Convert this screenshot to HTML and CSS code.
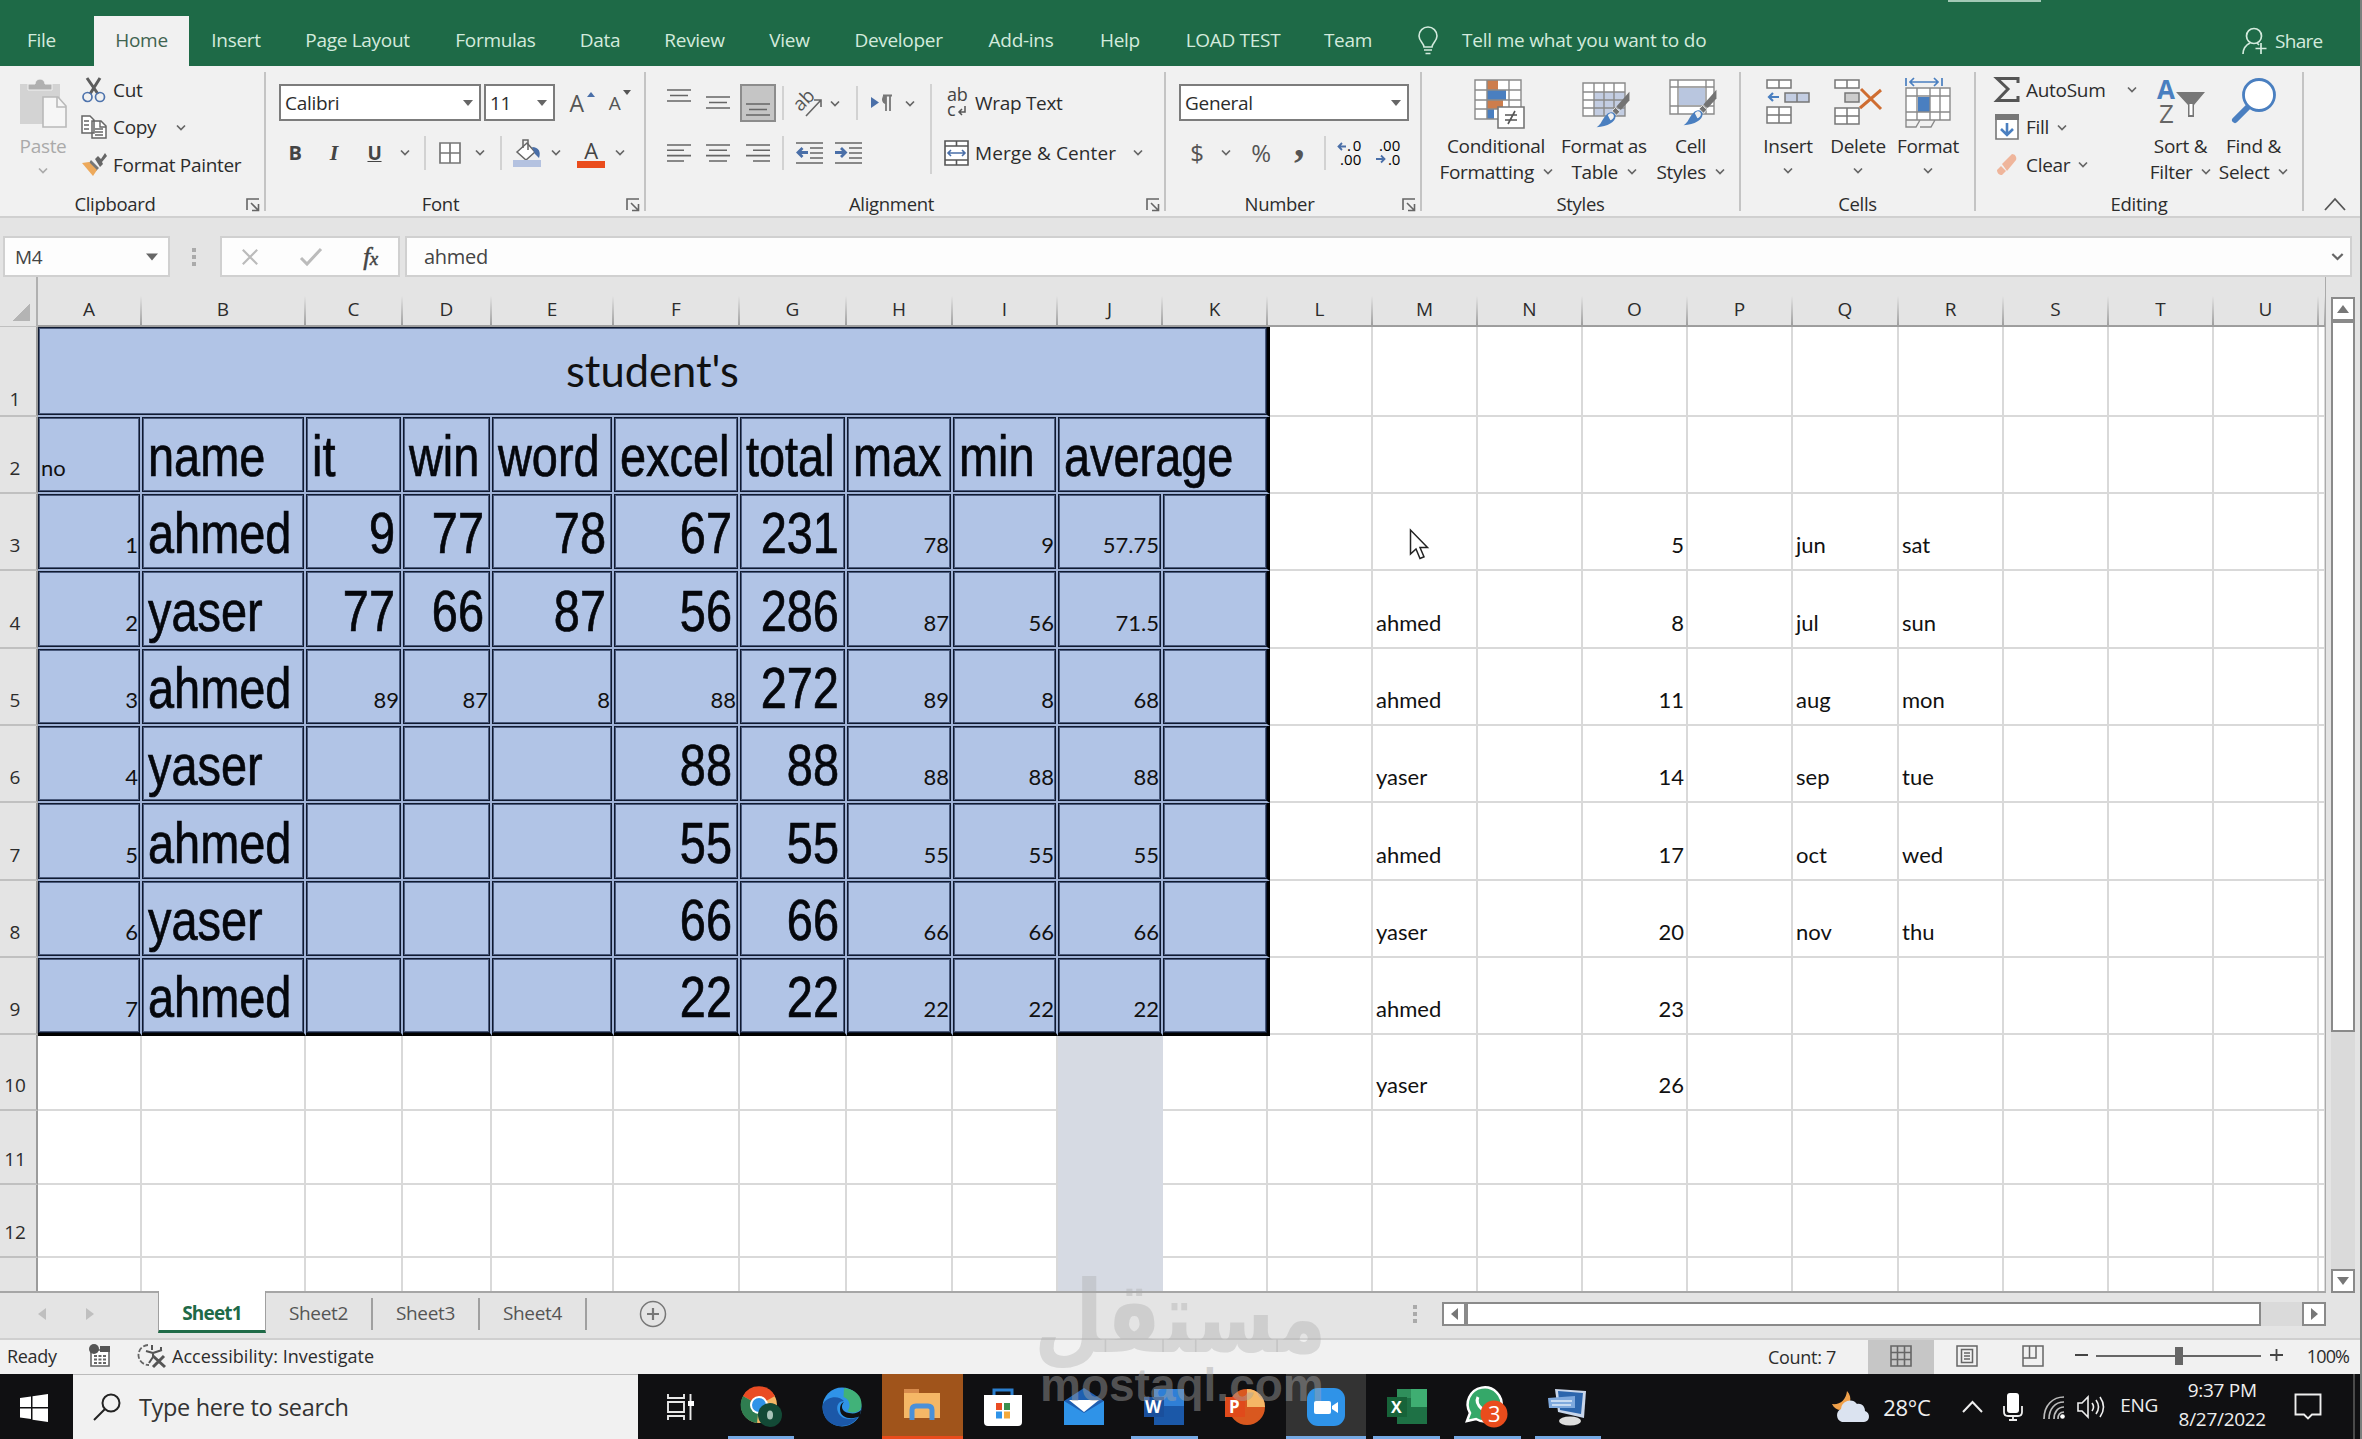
FILE: index.html
```html
<!DOCTYPE html>
<html lang="en">

<head>
    <meta charset="UTF-8">
    <meta name="viewport" content="width=device-width, initial-scale=1.0">
    <title>Sheet1</title>
    <link rel="stylesheet" href="styles.css">
</head>

<body>
    <!-- shared icons -->
    <svg class="defs">
        <symbol id="chev" viewBox="0 0 10 7"><path d="M1 1.5l4 4 4-4" fill="none" stroke="currentColor" stroke-width="1.7" /></symbol>
        <symbol id="tri" viewBox="0 0 10 6"><path d="M0 0h10l-5 6z" fill="currentColor" /></symbol>
        <symbol id="launch" viewBox="0 0 14 14"><path d="M1 12V1h12M5 5l7 7M12.500 6v6.500H6" fill="none" stroke="#666" stroke-width="1.6" /></symbol>
        <symbol id="brush" viewBox="0 0 40 44"><path d="M39 1v10L29 22l-5-4z" fill="#737373" /><path d="M23 19l5 5-4 4-5-5z" fill="#737373" stroke="#f1f1f1" /><path d="M12 28c5-6 11-3 11 1 0 7-9 12-22 13 6-4 6-9 11-14z" fill="#4a7fc0" /><path d="M14 28c3-4 7-2 7 1s-2 4-4 5z" fill="#f1f1f1" /></symbol>
    </svg>

    <div class="window">
        <nav class="tabs">
            <i class="topline"></i>
            <span>File</span>
            <span class="active">Home</span>
            <span>Insert</span>
            <span>Page Layout</span>
            <span>Formulas</span>
            <span>Data</span>
            <span>Review</span>
            <span>View</span>
            <span>Developer</span>
            <span>Add-ins</span>
            <span>Help</span>
            <span>LOAD TEST</span>
            <span>Team</span>
            <svg class="bulb" width="20" height="28" viewBox="0 0 20 28"><path d="M6 20c0-4-5-6-5-11a9 9 0 0 1 18 0c0 5-5 7-5 11zM6 23h8M7.500 26.500h5" fill="none" stroke="#d3eadd" stroke-width="1.6" /></svg>
            <span class="tell">Tell me what you want to do</span>
            <span class="share">
                <svg width="26" height="28" viewBox="0 0 26 28"><circle cx="12" cy="9" r="7.500" fill="none" stroke="#d3eadd" stroke-width="1.7" /><path d="M1 27c0-6 3-9 7-11M19 16v11M13.500 21.500h11M15 16l2 2" fill="none" stroke="#d3eadd" stroke-width="1.7" /></svg>
                Share
            </span>
        </nav>

        <section class="ribbon">
            <div class="group clipboard">
                <div class="body">
                    <div class="big disabled">
                        <svg width="48" height="53" viewBox="0 0 48 53"><path d="M1 7h40v40H1z" fill="#d3d3d3" /><path d="M9 13V7h7a5 5 0 0 1 10 0h7v6z" fill="#b0b0b0" stroke="#f1f1f1" /><path d="M24 20h15l8 9v21H24z" fill="#f6f6f6" stroke="#b9b9b9" stroke-width="1.6" /><path d="M38 20v10h9" fill="none" stroke="#b9b9b9" stroke-width="1.6" /></svg>
                        <b>Paste</b>
                        <svg class="chev"><use href="#chev" /></svg>
                    </div>
                    <div class="list">
                        <p><svg width="26" height="26" viewBox="0 0 26 26"><path d="M6 1l11 16M19 1L9 17" stroke="#5d5d5d" stroke-width="3" /><circle cx="6.500" cy="20" r="4.500" fill="none" stroke="#4f74ad" stroke-width="1.700" /><circle cx="19" cy="20" r="4.500" fill="none" stroke="#4f74ad" stroke-width="1.700" /></svg>Cut</p>
                        <p><svg width="26" height="26" viewBox="0 0 26 26"><path d="M1 2h8l4 4v13H1zM11 7h9l5 5v12H11z" fill="#fff" stroke="#666" stroke-width="1.500" /><path d="M19 7v6h6M3 7h5M3 11h5M3 15h5M14 15h8M14 18h8M14 21h8" fill="none" stroke="#666" stroke-width="1.400" /></svg>Copy<svg class="chev far"><use href="#chev" /></svg></p>
                        <p><svg width="26" height="26" viewBox="0 0 26 26"><path d="M14 7l3-3 3 3 4-6 2 3-5 6 1 2-3 3z" fill="#666" /><path d="M10 8l8 8-3 3-7-8z" fill="#777" /><path d="M1 11l7-1 8 8-4 6z" fill="#eda95b" /></svg>Format Painter</p>
                    </div>
                </div>
                <h4>Clipboard<svg><use href="#launch" /></svg></h4>
            </div>

            <div class="group font">
                <div class="row r1">
                    <div class="combo">Calibri<svg class="tri"><use href="#tri" /></svg></div>
                    <div class="combo">11<svg class="tri"><use href="#tri" /></svg></div>
                    <span class="grow">A<svg class="up"><use href="#tri" /></svg></span>
                    <span class="grow small">A<svg><use href="#tri" /></svg></span>
                </div>
                <div class="row r2">
                    <b>B</b><i class="it">I</i><u>U</u>
                    <svg class="chev"><use href="#chev" /></svg><i class="sep"></i>
                    <svg width="22" height="22" viewBox="0 0 22 22"><path d="M1 1h20v20H1zM11 1v20M1 11h20" fill="#fff" stroke="#777" stroke-width="1.700" /></svg>
                    <svg class="chev"><use href="#chev" /></svg><i class="sep"></i>
                    <svg width="28" height="28" viewBox="0 0 28 28"><path d="M4 13L14 4l8 9-9 8z" fill="#fff" stroke="#666" stroke-width="1.500" /><path d="M10 9V1h5v10" fill="none" stroke="#666" stroke-width="1.500" /><path d="M19 8c7 0 9 5 7 11l-4-4z" fill="#4a6fa8" /><path d="M0 21h28v7H0z" fill="#b4c2e0" /></svg>
                    <svg class="chev"><use href="#chev" /></svg>
                    <span class="fc">A</span>
                    <svg class="chev"><use href="#chev" /></svg>
                </div>
                <h4>Font<svg><use href="#launch" /></svg></h4>
            </div>

            <div class="group align">
                <div class="body">
                    <div class="icons">
                        <div class="row r1">
                            <svg width="24" height="30" viewBox="0 0 24 30"><path d="M0 2h24M3 7.500h18M0 13h24" stroke="#666" stroke-width="1.600" /></svg>
                            <svg width="24" height="30" viewBox="0 0 24 30"><path d="M0 9h24M3 14.500h18M0 20h24" stroke="#666" stroke-width="1.600" /></svg>
                            <span class="sel"><svg width="24" height="30" viewBox="0 0 24 30"><path d="M0 16h24M3 21.500h18M0 27h24" stroke="#666" stroke-width="1.600" /></svg></span>
                            <i class="sep"></i>
                            <svg width="28" height="28" viewBox="0 0 28 28"><text x="0" y="18" transform="rotate(-45 9 14)" font-size="19" fill="#555">ab</text><path d="M11 27L26 11M19 11h7v7" fill="none" stroke="#666" stroke-width="1.600" /></svg>
                            <svg class="chev"><use href="#chev" /></svg><i class="sep"></i>
                            <svg width="22" height="18" viewBox="0 0 22 18"><path d="M0 3l8 5.500L0 14z" fill="#4a6fa8" /><path d="M15 17V2M19 17V2M12 1.500h9" stroke="#777" stroke-width="1.800" /><path d="M15 1a4 4.500 0 0 0 0 9z" fill="#777" /></svg>
                            <svg class="chev"><use href="#chev" /></svg>
                        </div>
                        <div class="row r2">
                            <svg width="24" height="20" viewBox="0 0 24 20"><path d="M0 2h24M0 7.300h17M0 12.600h24M0 18h17" stroke="#666" stroke-width="1.600" /></svg>
                            <svg width="24" height="20" viewBox="0 0 24 20"><path d="M0 2h24M3 7.300h18M0 12.600h24M3 18h18" stroke="#666" stroke-width="1.600" /></svg>
                            <svg width="24" height="20" viewBox="0 0 24 20"><path d="M0 2h24M7 7.300h17M0 12.600h24M7 18h17" stroke="#666" stroke-width="1.600" /></svg>
                            <i class="sep"></i>
                            <svg width="27" height="24" viewBox="0 0 27 24"><path d="M0 2h27M14 7h13M14 12h13M14 17h13M0 22h27" stroke="#666" stroke-width="1.500" /><path d="M12 11.500H2M6.500 7L2 11.500 6.500 16" fill="none" stroke="#4a6fa8" stroke-width="2.800" /></svg>
                            <svg width="27" height="24" viewBox="0 0 27 24"><path d="M0 2h27M14 7h13M14 12h13M14 17h13M0 22h27" stroke="#666" stroke-width="1.500" /><path d="M0 11.500h10M6 7l4.500 4.500L6 16" fill="none" stroke="#4a6fa8" stroke-width="2.800" /></svg>
                        </div>
                    </div>
                    <div class="wrap">
                        <p><svg width="25" height="28" viewBox="0 0 25 28"><text x="3" y="12" font-size="18" fill="#444">ab</text><text x="3" y="27" font-size="18" fill="#444">c</text><path d="M21 17v6h-6M18 20l-3 3 3 3" fill="none" stroke="#555" stroke-width="1.500" /></svg>Wrap Text</p>
                        <p><svg width="25" height="26" viewBox="0 0 25 26"><path d="M1 1h23v24H1zM1 6h23M1 20h23M12.500 1v5M12.500 20v5" fill="#fff" stroke="#555" stroke-width="1.600" /><path d="M4 13h17M7 10l-3 3 3 3M18 10l3 3-3 3" fill="none" stroke="#4a6fa8" stroke-width="1.600" /></svg><span class="merge">Merge &amp; Center</span><svg class="chev far"><use href="#chev" /></svg></p>
                    </div>
                </div>
                <h4>Alignment<svg><use href="#launch" /></svg></h4>
            </div>

            <div class="group number">
                <div class="row r1">
                    <div class="combo">General<svg class="tri"><use href="#tri" /></svg></div>
                </div>
                <div class="row r2">
                    <span>$</span><svg class="chev"><use href="#chev" /></svg><span>%</span><span class="comma">,</span><i class="sep"></i>
                    <svg width="25" height="26" viewBox="0 0 25 26"><text x="10" y="11" font-size="15" textLength="14">.0</text><text x="3" y="25" font-size="15" textLength="21">.00</text><path d="M9 6.500H1.500M5 3L1.500 6.500 5 10" fill="none" stroke="#4a6fa8" stroke-width="1.800" /></svg>
                    <svg width="25" height="26" viewBox="0 0 25 26"><text x="3" y="11" font-size="15" textLength="21">.00</text><text x="12" y="25" font-size="15" textLength="12">.0</text><path d="M0 19h8.500M5 15.500L8.500 19 5 22.500" fill="none" stroke="#4a6fa8" stroke-width="1.800" /></svg>
                </div>
                <h4>Number<svg><use href="#launch" /></svg></h4>
            </div>

            <div class="group styles">
                <div class="body">
                    <div class="big">
                        <svg width="52" height="53" viewBox="0 0 52 53"><path d="M2 3h46v39H2z" fill="#fff" /><path d="M14 3h11v10H14zM14 23h16v9H14z" fill="#cd7d4c" /><path d="M14 13h19v10H14zM14 32h7v10h-7z" fill="#4a7fc0" /><path d="M2 3h46v39H2zM14 3v39M36 3v39M2 13h46M2 23h46M2 32h46" fill="none" stroke="#8a8a8a" stroke-width="1.400" /><path d="M25 30h26v21H25z" fill="#fff" stroke="#777" stroke-width="1.600" /><path d="M32 38h12M32 43h12M42 34l-7 13" stroke="#555" stroke-width="1.600" /></svg>
                        <b>Conditional</b>
                        <b>Formatting <svg class="chev"><use href="#chev" /></svg></b>
                    </div>
                    <div class="big">
                        <svg width="50" height="53" viewBox="0 0 50 53"><path d="M1 6h42v33H1z" fill="#fff" /><path d="M12 15h31v24H12z" fill="#c3cde2" /><path d="M1 6h42v33H1zM12 6v33M22 6v33M32 6v33M1 15h42M1 23h42M1 31h42" fill="none" stroke="#8a8a8a" stroke-width="1.400" /><use href="#brush" x="12" y="14" width="38" height="38" /></svg>
                        <b>Format as</b>
                        <b>Table <svg class="chev"><use href="#chev" /></svg></b>
                    </div>
                    <div class="big">
                        <svg width="50" height="53" viewBox="0 0 50 53"><path d="M1 3h44v34H1z" fill="#fff" /><path d="M10 11h26v17H10z" fill="#b9c6df" /><path d="M1 3h44v34H1zM9 3v34M37 3v34M1 10h44M1 29h44" fill="none" stroke="#8a8a8a" stroke-width="1.400" /><use href="#brush" x="12" y="12" width="38" height="38" /></svg>
                        <b>Cell</b>
                        <b>Styles <svg class="chev"><use href="#chev" /></svg></b>
                    </div>
                </div>
                <h4>Styles</h4>
            </div>

            <div class="group cells">
                <div class="body">
                    <div class="big">
                        <svg width="44" height="53" viewBox="0 0 44 53"><path d="M1 3h24v8H1zM13 3v8M1 30h24v16H1zM13 30v16M1 38h24" fill="#fff" stroke="#777" stroke-width="1.500" /><path d="M19 16h24v9H19zM31 16v9" fill="#c3cde2" stroke="#777" stroke-width="1.500" /><path d="M13 20H3M7 16l-4 4 4 4" fill="none" stroke="#4a7fc0" stroke-width="2.200" /></svg>
                        <b>Insert</b>
                        <svg class="chev"><use href="#chev" /></svg>
                    </div>
                    <div class="big">
                        <svg width="48" height="53" viewBox="0 0 48 53"><path d="M1 3h24v8H1zM13 3v8M1 31h24v16H1zM13 31v16M1 39h24" fill="#fff" stroke="#777" stroke-width="1.500" /><path d="M11 16h14v9H11z" fill="#ccc" stroke="#777" stroke-width="1.500" /><path d="M27 12l20 20M47 13L26 31" stroke="#cf6d31" stroke-width="3" /></svg>
                        <b>Delete</b>
                        <svg class="chev"><use href="#chev" /></svg>
                    </div>
                    <div class="big">
                        <svg width="46" height="53" viewBox="0 0 46 53"><path d="M1 11h44v32H1z" fill="#fff" /><path d="M13 20h12v15H13z" fill="#4a7fc0" /><path d="M1 11h44v32H1zM12 11v32M25 11v32M35 11v32M1 19h44M1 35h44M1 43v7h10l4-7M15 50h11l4-7" fill="none" stroke="#8a8a8a" stroke-width="1.400" /><path d="M1 1v8M37 1v8M5 5h28M9 1L5 5l4 4M29 1l4 4-4 4" fill="none" stroke="#4a7fc0" stroke-width="1.700" /></svg>
                        <b>Format</b>
                        <svg class="chev"><use href="#chev" /></svg>
                    </div>
                </div>
                <h4>Cells</h4>
            </div>

            <div class="group editing">
                <div class="body">
                    <div class="list">
                        <p><svg width="26" height="26" viewBox="0 0 26 26"><path d="M24 6V1.500H3L14 12 3 23.500h21V19" fill="none" stroke="#555" stroke-width="3" /></svg>AutoSum<svg class="chev far2"><use href="#chev" /></svg></p>
                        <p><svg width="26" height="26" viewBox="0 0 26 26"><path d="M2 1h22v24H2z" fill="#fff" stroke="#777" stroke-width="1.600" /><path d="M1 0h24v6H1z" fill="#777" /><path d="M13 9v12M7 15l6 6 6-6" fill="none" stroke="#4a7fc0" stroke-width="2.600" /></svg>Fill<svg class="chev"><use href="#chev" /></svg></p>
                        <p><svg width="26" height="26" viewBox="0 0 26 26"><path d="M8 12L18 2c3 0 5 3 4 6L13 19z" fill="#efb59b" /><path d="M7 14l5 5-4 4c-3 0-5-2-5-5z" fill="#efb59b" /></svg>Clear<svg class="chev"><use href="#chev" /></svg></p>
                    </div>
                    <div class="big">
                        <svg width="50" height="53" viewBox="0 0 50 53"><text x="1" y="22" font-size="26" font-weight="bold" fill="#4a7fc0">A</text><text x="3" y="46" font-size="26" fill="#666">Z</text><path d="M20 15h29L38 28v12h-6V28z" fill="#777" /><path d="M33.500 27h3v11h-3z" fill="#fff" /></svg>
                        <b>Sort &amp;</b>
                        <b>Filter <svg class="chev"><use href="#chev" /></svg></b>
                    </div>
                    <div class="big">
                        <svg width="46" height="53" viewBox="0 0 46 53"><path d="M18 29L4 43" stroke="#4a7fc0" stroke-width="6" stroke-linecap="round" /><circle cx="28" cy="18" r="15.500" fill="#fff" stroke="#4a7fc0" stroke-width="2.800" /></svg>
                        <b>Find &amp;</b>
                        <b>Select <svg class="chev"><use href="#chev" /></svg></b>
                    </div>
                </div>
                <h4>Editing</h4>
            </div>
            <svg class="collapse" width="22" height="14" viewBox="0 0 22 14"><path d="M1 13L11 2l10 11" fill="none" stroke="#555" stroke-width="1.800" /></svg>
        </section>

        <section class="formula">
            <div class="box namebox">M4<svg class="tri"><use href="#tri" /></svg></div>
            <i class="dots"></i>
            <div class="box fx">
                <svg width="18" height="18" viewBox="0 0 20 18"><path d="M2 1l16 16M18 1L2 17" stroke="#bbb" stroke-width="2.400" /></svg>
                <svg width="22" height="18" viewBox="0 0 22 18"><path d="M1 10l6 6L21 1" fill="none" stroke="#bbb" stroke-width="3" /></svg>
                <em>f<small>x</small></em>
            </div>
            <div class="box input">ahmed<svg class="chev"><use href="#chev" /></svg></div>
        </section>

        <main class="main">
            <div class="sheet" id="sheet"></div>
            <div class="vscroll">
                <div class="btn"><svg width="12" height="8" viewBox="0 0 12 8"><path d="M0 8h12L6 0z" fill="#777" /></svg></div>
                <div class="thumb"></div>
                <div class="btn end"><svg width="12" height="8" viewBox="0 0 12 8"><path d="M0 0h12L6 8z" fill="#777" /></svg></div>
            </div>
        </main>

        <section class="sheets">
            <svg width="8" height="12" viewBox="0 0 8 12"><path d="M8 0v12L0 6z" fill="#bfbfbf" /></svg>
            <svg width="8" height="12" viewBox="0 0 8 12"><path d="M0 0v12l8-6z" fill="#bfbfbf" /></svg>
            <span class="current">Sheet1</span>
            <span>Sheet2</span>
            <span>Sheet3</span>
            <span>Sheet4</span>
            <svg class="add" width="28" height="28" viewBox="0 0 28 28"><circle cx="14" cy="14" r="12.500" fill="none" stroke="#777" stroke-width="1.500" /><path d="M14 8v12M8 14h12" stroke="#777" stroke-width="2.200" /></svg>
            <i class="dots"></i>
            <div class="hscroll">
                <div class="btn"><svg width="7" height="12" viewBox="0 0 7 12"><path d="M7 0v12L0 6z" fill="#777" /></svg></div>
                <div class="thumb"></div>
                <div class="btn end"><svg width="7" height="12" viewBox="0 0 7 12"><path d="M0 0v12l7-6z" fill="#777" /></svg></div>
            </div>
        </section>

        <section class="status">
            <span>Ready</span>
            <svg class="macro" width="22" height="24" viewBox="0 0 22 24"><path d="M2 6h18v16H2z" fill="#fff" stroke="#666" stroke-width="1.600" /><path d="M11 2h10v6H11z" fill="#555" /><circle cx="5" cy="5" r="5" fill="#555" /><path d="M5 12h12M5 15.500h12M5 19h12" stroke="#666" stroke-width="1.800" stroke-dasharray="3 1.500" /></svg>
            <svg class="acc" width="27" height="26" viewBox="0 0 27 26"><path d="M8 2a10 10 0 0 0 1 20" fill="none" stroke="#666" stroke-width="1.800" stroke-dasharray="5 2" /><path d="M12 2v5M6 8l7 2v4l-4 6M13 10l9-3M21 4v4" fill="none" stroke="#555" stroke-width="2" /><path d="M13 13l12 11M24 13L13 24" stroke="#555" stroke-width="3" /></svg>
            <span class="check">Accessibility: Investigate</span>
            <span class="count">Count: 7</span>
            <div class="views">
                <span class="on"><svg width="22" height="22" viewBox="0 0 22 22"><path d="M1 1h20v20H1zM7.500 1v20M14.500 1v20M1 7.500h20M1 14.500h20" fill="none" stroke="#666" stroke-width="1.600" /></svg></span>
                <span><svg width="22" height="22" viewBox="0 0 22 22"><path d="M1 1h20v20H1zM5.500 4.500h11v13h-11zM8 8h6M8 11h6M8 14h6" fill="none" stroke="#666" stroke-width="1.500" /></svg></span>
                <span><svg width="22" height="22" viewBox="0 0 22 22"><path d="M1 1h20v20H1zM1 13h13V1M7.500 1v12" fill="none" stroke="#666" stroke-width="1.500" /></svg></span>
            </div>
            <svg class="zoom" width="208" height="20" viewBox="0 0 208 20"><path d="M0 9h13M195 9h13M201.500 3v12" stroke="#444" stroke-width="1.800" /><path d="M21 10h165" stroke="#666" stroke-width="2" /><path d="M100 1h8v18h-8z" fill="#666" /></svg>
            <span class="pct">100%</span>
        </section>

        <footer class="taskbar">
            <div class="start"><svg width="28" height="28" viewBox="0 0 28 28"><path d="M0 4l11-1.500V13H0zM12.500 2.300L28 0v13H12.500zM0 14.500h11V25L0 23.500zM12.500 14.500H28V28l-15.500-2.200z" fill="#fff" /></svg></div>
            <div class="search">
                <svg width="28" height="28" viewBox="0 0 28 28"><circle cx="18" cy="10" r="8.500" fill="none" stroke="#222" stroke-width="2" /><path d="M12 16L1 27" stroke="#222" stroke-width="2" /></svg>
                Type here to search
            </div>
            <div class="apps">
                <span><svg width="28" height="26" viewBox="0 0 28 26"><path d="M2 0v4h16V0M2 26v-4h16v4M2 8h16v10H2zM24.500 0v26" fill="none" stroke="#e8e8e8" stroke-width="1.900" /><path d="M22 7h6v5h-6z" fill="#fff" /></svg></span>
                <span class="open"><svg width="42" height="42" viewBox="0 0 42 42"><circle cx="19" cy="19" r="18" fill="#f5b766" /><path d="M19 19L3 10a18 18 0 0 1 32 0z" fill="#ea4c24" /><path d="M19 19l-2 18A18 18 0 0 1 3 10z" fill="#2f7d50" /><circle cx="19" cy="19" r="9" fill="#fff" /><circle cx="19" cy="19" r="7" fill="#2f93e8" /><circle cx="30" cy="29" r="12" fill="#134a36" /><ellipse cx="30" cy="29" rx="3" ry="4.500" fill="#a9c4b9" /></svg></span>
                <span><svg width="40" height="40" viewBox="0 0 40 40"><circle cx="20" cy="20" r="19.500" fill="#2f93e8" /><path d="M22 1c12 1 18 9 17.500 17 0 8-9 9-14 6 4-5 2-12-4-14z" fill="#41b279" /><path d="M1 17c4-8 16-9 21-3-9 0-9 13 0 17 5 2 10 1 14-1C30 41 10 43 3 30c-2-4-3-9-2-13z" fill="#1b58a8" /><path d="M22 15c-4 4-2 10 5 11 5 1 9 0 12-3l-1 6c-7 4-20 3-20-7 0-3 1-6 4-7z" fill="#101012" /></svg></span>
                <span class="folder"><svg width="36" height="32" viewBox="0 0 36 32"><path d="M0 0h15v4h21v25H0z" fill="#f5b766" /><path d="M0 0h15v4H0z" fill="#d88b4c" /><path d="M8 31V21q0-4 4-4h12q4 0 4 4v10" fill="none" stroke="#4a90d9" stroke-width="5" /></svg></span>
                <span><svg width="38" height="40" viewBox="0 0 38 40"><path d="M10 9V3h18v6" fill="none" stroke="#2a7fcf" stroke-width="3" /><path d="M0 8h38v27q0 4-4 4H4q-4 0-4-4z" fill="#fff" /><path d="M12 16h6v7h-6z" fill="#ea4c24" /><path d="M20 16h6v7h-6z" fill="#3b8f4e" /><path d="M12 24.500h6v7h-6z" fill="#2f93e8" /><path d="M20 24.500h6v7h-6z" fill="#f5a93b" /></svg></span>
                <span><svg width="40" height="38" viewBox="0 0 40 38"><path d="M0 13L20 0l20 13v24H0z" fill="#1f5fb0" /><path d="M5 12h30L20 24z" fill="#fff" /><path d="M0 13l20 12 20-12v24H0z" fill="#2f93e8" /></svg></span>
                <span class="open"><svg width="40" height="36" viewBox="0 0 40 36"><path d="M10 0h30v36H10z" fill="#1b58a8" /><path d="M10 0h30v17H10z" fill="#2f7fd6" /><path d="M0 8h20v20H0z" fill="#1a4f9c" /><text x="1" y="24" font-size="17" font-weight="bold" fill="#fff">W</text></svg></span>
                <span><svg width="40" height="36" viewBox="0 0 40 36"><circle cx="22" cy="18" r="18" fill="#d9581f" /><path d="M22 0a18 18 0 0 1 18 18H22z" fill="#f5b766" /><path d="M0 8h20v20H0z" fill="#e04a1b" /><text x="4" y="24" font-size="17" font-weight="bold" fill="#fff">P</text></svg></span>
                <span class="open focus"><svg width="38" height="38" viewBox="0 0 38 38"><rect width="38" height="38" rx="11" fill="#2f93e8" /><rect x="7" y="13" width="17" height="13" rx="2" fill="#fff" /><path d="M25 18l6-4v11l-6-4z" fill="#fff" /></svg></span>
                <span class="open"><svg width="40" height="36" viewBox="0 0 40 36"><path d="M10 0h30v35H10z" fill="#1e7145" /><path d="M24 0h16v18H24z" fill="#3fae72" /><path d="M10 0h14v9H10z" fill="#2f8f5b" /><path d="M0 8h20v20H0z" fill="#176339" /><text x="4" y="24" font-size="16" font-weight="bold" fill="#fff">X</text></svg></span>
                <span class="open"><svg width="42" height="42" viewBox="0 0 42 42"><path d="M1 35l3-8a17 17 0 1 1 6 6z" fill="#35a869" stroke="#fff" stroke-width="2.500" /><path d="M12 11q-3 6 4 12 6 5 10 2" fill="none" stroke="#fff" stroke-width="3" /><circle cx="28" cy="28" r="13.500" fill="#ea4c1c" /><text x="22" y="36" font-size="22" fill="#fff">3</text></svg></span>
                <span class="open"><svg width="40" height="38" viewBox="0 0 40 38"><ellipse cx="22" cy="33" rx="11" ry="4.500" fill="#ddd" /><path d="M7 1l31 2-2 27-26-6z" fill="#c9d6ea" /><path d="M10 3l25 2-2 21-21-4z" fill="#2d66ad" /><path d="M0 10l27-2v12L1 20z" fill="#7fa9dd" /><path d="M3 13h21M4 17h19" stroke="#dfeaf8" stroke-width="1.500" /></svg></span>
            </div>
            <div class="tray">
                <svg width="38" height="34" viewBox="0 0 38 34"><path d="M15 1c6 6 4 17-6 19-4 0-7-2-9-6 8 1 14-4 15-13z" fill="#f0a14b" /><path d="M10 32a7 7 0 0 1-1-13 9 9 0 0 1 16-5c6-1 8 4 8 7 6 2 5 11-1 11z" fill="#dbe3f0" /></svg>
                <span class="temp">28°C</span>
                <svg width="21" height="12" viewBox="0 0 21 12"><path d="M1 11l9.500-10L20 11" fill="none" stroke="#eee" stroke-width="2" /></svg>
                <svg width="20" height="28" viewBox="0 0 20 28"><rect x="4" y="0" width="12" height="20" rx="3" fill="#fff" /><path d="M1 13v6q0 4 4 4h10q4 0 4-4v-6M10 23v4M6 27h8" fill="none" stroke="#eee" stroke-width="1.800" /></svg>
                <svg width="22" height="24" viewBox="0 0 22 24"><path d="M1 24C1 10 10 2 21 2M6 24C6 14 12 7 21 7M11 24c0-7 4-12 10-12M15 24c0-4 2-7 6-7" fill="none" stroke="#bbb" stroke-width="1.700" /><circle cx="19.500" cy="21.500" r="2.300" fill="#fff" /></svg>
                <svg width="28" height="24" viewBox="0 0 28 24"><path d="M1 8h4l6-6v20l-6-6H1zM15 8q3 4 0 8M19 5q5 7 0 14M23 2q7 10 0 20" fill="none" stroke="#eee" stroke-width="1.600" /></svg>
                <span class="lang">ENG</span>
                <div class="clock">9:37 PM<br>8/27/2022</div>
                <svg class="note" width="28" height="28" viewBox="0 0 28 28"><path d="M1.500 1.500h25v20H18l-4 4-4-4H1.500z" fill="none" stroke="#eee" stroke-width="1.900" /></svg>
            </div>
        </footer>

        <svg class="pointer" width="20" height="33" viewBox="0 0 20 33"><path d="M1.500 2v24l5.500-5 4 9.500 4-1.700-4-9.300h7.500z" fill="#fff" stroke="#222" stroke-width="1.500" /></svg>
        <div class="mark">
            <div class="ar" lang="ar">مستقل</div>
            <div class="en">mostaql.com</div>
        </div>
    </div>
    <script src="script.js"></script>
</body>

</html>
```
FILE: styles.css
```css
* {
    margin: 0;
    padding: 0;
    box-sizing: border-box;
}

body {
    width: 2362px;
    height: 1439px;
    overflow: hidden;
    font-family: "Open Sans", "Noto Sans", sans-serif;
    font-size: 19px;
    letter-spacing: -0.3px;
    color: #2c2c2c;
}

svg {
    flex: none;
    overflow: visible;
}

.defs {
    position: absolute;
    width: 0;
    height: 0;
}

.window {
    position: relative;
    width: 2362px;
    height: 1439px;
    border-right: 2px solid #7b7f7d;
    background: #e4e4e4;
}

/* 选项卡 */
.tabs {
    height: 66px;
    padding-top: 16px;
    background: #1e6a47;
    color: #d3eadd;
    display: grid;
    grid-template-columns: 94px 95px 94px 149px 127px 82px 107px 83px 135px 110px 88px 138px 92px 68px 703px 1fr;
    line-height: 49px;
    text-align: center;
    white-space: nowrap;
}

.topline {
    position: absolute;
    left: 1948px;
    top: 0;
    width: 93px;
    height: 2px;
    background: #a3c9b6;
}

.tabs span:nth-of-type(1) {
    padding-right: 11px;
}

.tabs .active {
    background: #f1f1f1;
    color: #3f6350;
}

.bulb {
    align-self: center;
    justify-self: center;
}

.tell {
    text-align: left;
    letter-spacing: -0.2px;
}

.tabs .share {
    display: flex;
    align-items: center;
    gap: 7px;
    padding-left: 77px;
    letter-spacing: -0.7px;
}

/* 功能区 */
.ribbon {
    height: 152px;
    background: #f1f1f1;
    border-bottom: 2px solid #d0d0d0;
    display: flex;
    padding-top: 6px;
}

.group {
    position: relative;
    height: 139px;
    border-right: 2px solid #c4c4c4;
    padding-top: 12px;
    display: flex;
    flex-direction: column;
}

.group h4 {
    position: relative;
    margin-top: auto;
    height: 24px;
    line-height: 24px;
    margin-bottom: -5px;
    font-size: 18.500px;
    font-weight: normal;
    text-align: center;
    flex: none;
}

.group h4 svg {
    position: absolute;
    right: 4px;
    top: 6px;
    width: 14px;
    height: 14px;
}

.body {
    display: flex;
    height: 119px;
}

.row {
    display: grid;
    align-items: center;
    justify-items: center;
    height: 37px;
}

.r2 {
    margin-top: 13px;
}

.chev {
    width: 10px;
    height: 7px;
    color: #666;
}

.tri {
    width: 10px;
    height: 6px;
    color: #666;
}

.sep {
    width: 2px;
    height: 34px;
    background: #d2d2d2;
}

.combo {
    width: 100%;
    height: 37px;
    border: 2px solid #7c7c7c;
    background: #fff;
    padding: 0 6px 0 4px;
    display: flex;
    align-items: center;
    justify-content: space-between;
}

.big {
    display: flex;
    flex-direction: column;
    align-items: center;
    white-space: nowrap;
}

.big > svg:first-child {
    margin-bottom: 3px;
}

.big b {
    font-weight: normal;
    line-height: 26px;
}

.big > .chev {
    margin-top: 8px;
}

.big b .chev {
    margin: 0 0 4px 4px;
}

.disabled,
.disabled .chev {
    color: #aaa;
}

.list p,
.wrap p {
    display: flex;
    align-items: center;
    height: 37.500px;
    gap: 6px;
    white-space: nowrap;
}

.list p .chev {
    margin-left: 2px;
}

.clipboard .list .far {
    margin-left: 14px;
}

.list .far2 {
    margin-left: 16px !important;
}

.clipboard,
.styles,
.cells,
.editing {
    padding-top: 5px;
}

.clipboard {
    width: 266px;
}

.clipboard .big {
    width: 84px;
    padding-left: 2px;
}

.clipboard .list {
    margin: -6px 0 0 -3px;
}

.clipboard h4 {
    padding-right: 34px;
}

.font {
    width: 380px;
    padding-left: 13px;
}

.font .r1 {
    grid-template-columns: 202px 71px 46px 24px;
    gap: 3px;
}

.font .r2 {
    grid-template-columns: 26px 52px 29px 31px 10px 40px 20px 22px 30px 28px 42px 16px;
    padding-left: 3px;
    font-size: 20px;
    color: #444;
}

.font h4 {
    padding-right: 42px;
}

.it {
    font-family: "Liberation Serif", serif;
    font-weight: bold;
    font-size: 22px;
}

.font u {
    font-weight: bold;
    font-size: 19px;
}

.fc {
    width: 28px;
    height: 30px;
    line-height: 24px;
    font-size: 22px;
    text-align: center;
    border-bottom: 7px solid #ea4c1c;
}

.grow {
    position: relative;
    font-size: 23px;
    color: #555;
    padding-right: 9px;
}

.grow svg {
    position: absolute;
    right: -2px;
    top: 5px;
    width: 8px;
    height: 5px;
}

.grow .up {
    transform: rotate(180deg);
    color: #4a6fa8;
}

.grow.small {
    font-size: 19px;
}

.grow.small svg {
    top: 0;
}

.align {
    width: 520px;
    padding-left: 13px;
}

.align .icons {
    width: 273px;
    border-right: 2px solid #d2d2d2;
    height: 90px;
}

.align .icons .r1 {
    grid-template-columns: 40px 38px 42px 8px 44px 8px 36px 13px 44px;
}

.align .icons .r2 {
    grid-template-columns: 40px 38px 42px 8px 44px 34px;
}

.sel {
    width: 36px;
    height: 38px;
    border: 2px solid #8c8c8c;
    background: #c5c5c5;
    display: flex;
    align-items: center;
    justify-content: center;
}

.wrap {
    padding-left: 12px;
}

.wrap p {
    height: 37px;
    margin-bottom: 13px;
}

.merge {
    letter-spacing: 0.1px;
}

.wrap .far {
    margin-left: 11px;
}

.align h4 {
    padding-right: 40px;
}

.number {
    width: 256px;
    padding-left: 13px;
}

.number .r1 {
    grid-template-columns: 230px;
}

.number .r2 {
    grid-template-columns: 36px 22px 48px 28px 24px 24px 54px;
    font-size: 24px;
    color: #555;
}

.number .comma {
    font: bold 42px/20px "Liberation Serif", serif;
    margin-top: -22px;
}

.number h4 {
    padding-right: 40px;
}

.styles {
    width: 319px;
}

.styles .body {
    display: grid;
    grid-template-columns: 124px 92px 81px;
    padding-left: 12px;
}

.styles .big > svg {
    position: relative;
    left: 3px;
}

.cells {
    width: 235px;
}

.cells .body {
    display: grid;
    grid-template-columns: 70px 70px 70px;
    padding-left: 12px;
}

.editing {
    width: 328px;
}

.editing .list {
    width: 168px;
    padding-left: 18px;
    margin-top: -6px;
}

.editing .big {
    width: 73px;
}

.collapse {
    margin: 125px 0 0 20px;
}

/* 编辑栏 */
.formula {
    height: 59px;
    padding: 18px 8px 0 3px;
    display: flex;
    font-size: 20px;
}

.box {
    height: 41px;
    border: 2px solid #d0d0d0;
    background: #fdfdfd;
    display: flex;
    align-items: center;
    justify-content: space-between;
    color: #444;
}

.namebox {
    width: 167px;
    padding: 0 10px;
    font-size: 19px;
}

.namebox .tri {
    width: 12px;
    height: 8px;
}

.dots {
    width: 4px;
    height: 18px;
    background: repeating-linear-gradient(#aaa 0 4px, transparent 4px 7px);
}

.formula .dots {
    margin: 12px 24px 0 22px;
}

.fx {
    width: 180px;
    padding: 0 20px 0 19px;
}

.fx em {
    font: italic 25px "Liberation Serif", serif;
    -webkit-text-stroke: 0.5px #444;
}

.fx small {
    font-size: 19px;
}

.input {
    flex: 1;
    margin-left: 5px;
    padding: 0 6px 0 17px;
}

.input .chev {
    width: 13px;
    height: 9px;
    stroke-width: 2;
}

.main {
    display: flex;
    height: 1016px;
}

/* 表格 */
.sheet {
    width: 2326px;
    height: 1016px;
    overflow: hidden;
    display: grid;
    grid-template-columns: 38px 104px 164px 97px 89px 122px 126px 107px 106px 105px 105px 105px 105px 105px 105px 105px 105px 106px 105px 105px 105px 105px 7px;
    grid-template-rows: 50px 90px 77px 77px 78px 77px 77px 78px 77px 77px 76px 74px 73px 35px;
    border-right: 1px solid #aaa;
    border-bottom: 2px solid #a6a6a6;
    font-family: Lato, sans-serif;
    font-size: 22px;
    line-height: 1;
    letter-spacing: 0;
    color: #111;
}

.cell {
    background: #fff;
    border-right: 2px solid #d9d9d9;
    border-bottom: 2px solid #d9d9d9;
    display: flex;
    align-items: flex-end;
    white-space: nowrap;
    padding: 0 2px 13px 3px;
}

.num {
    justify-content: flex-end;
}

.fill {
    background: #b1c4e6;
    border: 0 solid #9fb2d6;
    border-width: 0 2px 2px 0;
    box-shadow: inset 0 0 0 1px #101a30, inset 0 0 0 2px #4a5a7c;
    padding: 0 2px 13px 3px;
}

.fill.last {
    border-right: 3px solid #000;
    margin-right: -2px;
    position: relative;
}

.fill.bottom {
    border-bottom: 3px solid #000;
    margin-bottom: -1px;
    padding-bottom: 13px;
    position: relative;
}

.large {
    font-family: "Liberation Sans", Arial, sans-serif;
    font-size: 57.500px;
    padding: 0 6px 7px 6px;
    color: #05070c;
    -webkit-text-stroke: 0.7px #05070c;
}

.fill.bottom.large {
    padding-bottom: 7px;
}

.large span {
    transform: scaleX(.815);
    transform-origin: left;
}

.large.num span {
    transform-origin: right;
}

.title {
    grid-column: span 11;
    align-items: center;
    justify-content: center;
    font-size: 43.500px;
    padding: 0 0 1px;
}

.wide {
    grid-column: span 2;
}

.picked {
    background: #d6dae3;
    border: 0;
}

.head,
.corner,
.side {
    font-family: "Open Sans", sans-serif;
    font-size: 19px;
    color: #2c2c2c;
    background: #e4e4e4;
    display: flex;
    justify-content: center;
}

.head {
    border-bottom: 2px solid #9b9b9b;
    border-right: 2px solid;
    border-image: linear-gradient(#e4e4e4 40%, #9b9b9b) 2;
    padding-top: 23px;
}

.corner {
    border-bottom: 1px solid #c0c0c0;
    border-right: 2px solid #b0b0b0;
    background: linear-gradient(135deg, transparent 50%, #b4b4b4 50%) 12px 26px / 18px 18px no-repeat #e4e4e4;
}

.side {
    align-items: flex-end;
    border-right: 2px solid #9b9b9b;
    border-bottom: 2px solid #c0c0c0;
    padding: 0 6px 14px 0;
}

.side.first {
    padding-bottom: 6px;
}

/* 滚动条 */
.vscroll {
    width: 24px;
    margin: 20px 0 0 5px;
    background: #dadada;
    display: flex;
    flex-direction: column;
}

.btn {
    width: 24px;
    height: 24px;
    border: 2px solid #8a8a8a;
    background: #fff;
    display: flex;
    align-items: center;
    justify-content: center;
    flex: none;
}

.thumb {
    border: 2px solid #8a8a8a;
    background: #fff;
}

.vscroll .thumb {
    height: 711px;
}

.vscroll .end {
    margin-top: auto;
}

/* 工作表标签 */
.sheets {
    height: 45px;
    display: flex;
    align-items: center;
    position: relative;
    padding: 0 0 3px 38px;
}

.sheets > svg:nth-child(2) {
    margin-left: 40px;
}

.sheets > span {
    width: 107px;
    height: 32px;
    line-height: 30px;
    text-align: center;
    border-right: 2px solid #a0a0a0;
    color: #555;
    margin-top: -1px;
}

.sheets .current {
    width: 108px;
    margin: -5px 0 0 64px;
    height: 42px;
    line-height: 44px;
    background: #fff;
    border: 1px solid #a0a0a0;
    border-width: 0 1px 3px;
    border-bottom-color: #1e6a47;
    color: #1e6a47;
    font-weight: bold;
    letter-spacing: -0.8px;
}

.add {
    margin-left: 52px;
}

.sheets .dots {
    margin-left: 746px;
}

.hscroll {
    display: flex;
    width: 884px;
    margin-left: 25px;
    background: #dadada;
}

.hscroll .thumb {
    width: 795px;
}

.hscroll .end {
    margin-left: auto;
}

/* 状态栏 */
.status {
    height: 36px;
    background: #f1f1f1;
    border-top: 2px solid #cfcfcf;
    display: flex;
    align-items: center;
    padding: 0 0 3px 7px;
    font-size: 18px;
}

.status > span:nth-of-type(1) {
    width: 82px;
}

.acc {
    margin: 0 5px 0 29px;
}

.check {
    letter-spacing: 0.05px;
}

.status .count {
    margin-left: auto;
    padding: 2px 32px 0 0;
}

.views {
    display: flex;
    height: 34px;
    margin-bottom: -3px;
}

.views span {
    width: 66px;
    padding-bottom: 3px;
    display: flex;
    align-items: center;
    justify-content: center;
}

.views .on {
    background: #c6c6c6;
}

.zoom {
    margin-left: 9px;
}

.pct {
    width: 77px;
    text-align: right;
    padding-right: 11px;
    letter-spacing: -0.9px;
}

/* 任务栏 */
.taskbar {
    height: 65px;
    background: #101012;
    display: flex;
    color: #eee;
}

.start {
    width: 73px;
    padding: 20px 0 0 20px;
}

.search {
    width: 565px;
    background: #f1f1f1;
    border-top: 1px solid #bbb;
    color: #333;
    font-size: 23.500px;
    letter-spacing: -0.35px;
    display: flex;
    align-items: center;
    gap: 18px;
    padding: 0 0 1px 20px;
}

.apps {
    display: flex;
    padding-left: 2px;
}

.apps span {
    width: 80.700px;
    height: 65px;
    display: flex;
    align-items: center;
    justify-content: center;
    position: relative;
}

.apps .open::after {
    content: "";
    position: absolute;
    left: 7px;
    right: 7px;
    bottom: 0;
    height: 3px;
    background: #76a9e4;
}

.apps .focus {
    background: #333;
}

.apps .focus::after {
    left: 0 !important;
    right: 0 !important;
}

.apps .folder {
    background: #a0541b;
    border-bottom: 3px solid #ea4c1c;
}

.tray {
    flex: 1;
    display: flex;
    align-items: center;
    margin-left: 224px;
    border-right: 2px solid #4a4a4a;
    margin-right: 5px;
}

.temp {
    width: 79px;
    margin-left: 13px;
    font-size: 22px;
}

.tray svg + svg {
    margin-left: 20px;
}

.tray svg:nth-of-type(5) {
    margin-left: 12px;
}

.lang {
    margin-left: 15px;
    width: 47px;
    margin-top: -3px;
}

.clock {
    width: 110px;
    text-align: center;
    line-height: 29px;
    margin-top: -3px;
}

.note {
    margin-left: 17px;
}

.pointer {
    position: absolute;
    left: 1409px;
    top: 528px;
}

.mark {
    position: absolute;
    left: 1040px;
    top: 1270px;
    width: 282px;
    letter-spacing: 0;
    color: rgba(165, 165, 165, .35);
}

.ar {
    font: bold 80px/92px "DejaVu Sans", sans-serif;
    transform: translate(-6px, 2px) scaleY(1.25);
    white-space: nowrap;
    text-align: center;
}

.en {
    font: bold 46px/46px "Liberation Sans", sans-serif;
    color: rgba(165, 165, 165, .45);
    white-space: nowrap;
}
```
FILE: script.js
```js
var sheet = document.getElementById("sheet");
var letters = "ABCDEFGHIJKLMNOPQRSTU".split("");

// 以*开头的是大字体
var rows = [
    ["student's"],
    ["no", "*name", "*it", "*win", "*word", "*excel", "*total", "*max", "*min", "*average"],
    ["1", "*ahmed", "*9", "*77", "*78", "*67", "*231", "78", "9", "57.75", "", "", "", "", "5", "", "jun", "sat"],
    ["2", "*yaser", "*77", "*66", "*87", "*56", "*286", "87", "56", "71.5", "", "", "ahmed", "", "8", "", "jul", "sun"],
    ["3", "*ahmed", "89", "87", "8", "88", "*272", "89", "8", "68", "", "", "ahmed", "", "11", "", "aug", "mon"],
    ["4", "*yaser", "", "", "", "*88", "*88", "88", "88", "88", "", "", "yaser", "", "14", "", "sep", "tue"],
    ["5", "*ahmed", "", "", "", "*55", "*55", "55", "55", "55", "", "", "ahmed", "", "17", "", "oct", "wed"],
    ["6", "*yaser", "", "", "", "*66", "*66", "66", "66", "66", "", "", "yaser", "", "20", "", "nov", "thu"],
    ["7", "*ahmed", "", "", "", "*22", "*22", "22", "22", "22", "", "", "ahmed", "", "23"],
    ["", "", "", "", "", "", "", "", "", "", "", "", "yaser", "", "26"],
    [], [], []
];

function add(cls, text) {
    var div = document.createElement("div");
    div.className = cls;
    if (text) {
        var span = document.createElement("span");
        span.textContent = text;
        div.appendChild(span);
    }
    sheet.appendChild(div);
}

add("corner", "");
letters.forEach((value) => add("head", value));
add("head", "");

rows.forEach((row, r) => {
    add(r == 0 ? "side first" : "side", r < 12 ? String(r + 1) : "");
    for (var c = 0; c < 22; c++) {
        var text = row[c] || "";
        var cls = "cell";
        if (text[0] == "*") {
            cls += " large";
            text = text.slice(1);
        }
        if (text && !isNaN(text)) {
            cls += " num";
        }
        if (r < 9 && c < 11) {
            cls += " fill";
            if (r == 8) cls += " bottom";
            if (r == 0) {
                // A1:K1
                cls += " title last";
                c = 10;
            } else if (r == 1 && c == 9) {
                // J2:K2
                cls += " wide last";
                c = 10;
            } else if (c == 10) {
                cls += " last";
            }
        }
        if (r > 8 && c == 9) cls += " picked";
        add(cls, text);
    }
});
```
